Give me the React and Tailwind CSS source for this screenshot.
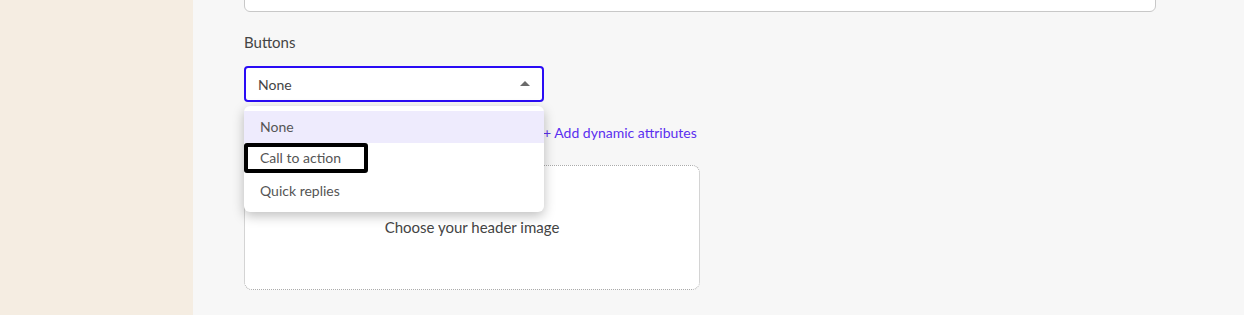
export default function App() {
  return (
    <div className="flex h-[315px] w-full overflow-hidden bg-[#f7f7f7] font-['Lato',sans-serif] text-[#3c3c3c]">
      <aside className="w-[193px] shrink-0 bg-[#f5ede2]" />

      <main className="flex-1 pl-[51px] pr-[88px]">
        {/* tail of the previous field */}
        <div className="-mt-4 h-[28px] rounded-b-[6px] border border-[#c8c8c8] bg-white" />

        <p className="mt-[20px] text-[15px] leading-5 text-[#444]">Buttons</p>

        <div className="relative mt-[14px] w-[300px]">
          <button
            type="button"
            className="flex h-[36px] w-full items-center justify-between rounded-[4px] border-2 border-[#2a0cf5] bg-white pl-[12px] pr-[12px] text-[14px] text-[#444]"
          >
            None
            <svg width="10" height="5" viewBox="0 0 10 5" className="mb-[2px]">
              <path d="M0 5 L5 0 L10 5 Z" fill="#6b6b6b" />
            </svg>
          </button>

          <ul className="absolute left-0 top-[40px] z-10 w-[300px] rounded-[6px] bg-white py-[5px] text-[14px] text-[#555] shadow-[0_4px_12px_rgba(0,0,0,0.25)]">
            <li className="flex h-[32px] items-center bg-[#eeebfd] px-[16px] pb-[2px]">None</li>
            <li className="flex h-[32px] items-center px-[16px]">
              <span className="-ml-[16px] -mt-[2px] flex h-[30px] w-[124px] items-center rounded-[3px] border-[4px] border-black pb-[2px] pl-[12px]">
                Call to action
              </span>
            </li>
            <li className="flex h-[32px] items-center px-[16px] pb-[2px]">Quick replies</li>
          </ul>
        </div>

        <div className="ml-[299px] mt-[21px] text-[14px] leading-5 text-[#5b2ff0]">+ Add dynamic attributes</div>

        <div className="mt-[22px] flex h-[125px] w-[456px] items-center justify-center rounded-[8px] border border-dotted border-[#aaa] bg-white text-[15px] text-[#444]">
          Choose your header image
        </div>
      </main>
    </div>
  );
}
